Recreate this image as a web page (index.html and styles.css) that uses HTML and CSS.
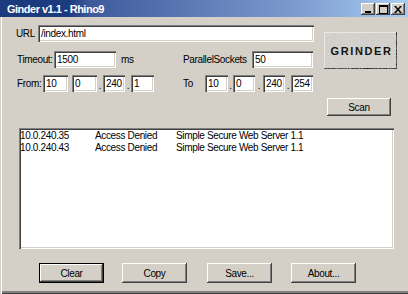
FILE: index.html
```html
<!DOCTYPE html>
<html>
<head>
<meta charset="utf-8">
<link rel="stylesheet" href="styles.css">
</head>
<body>
<div class="window">
  <div class="titlebar">
    <span class="title">Ginder v1.1 - Rhino9</span>
    <div class="tbtns">
      <div class="tbtn"><svg width="8" height="7" viewBox="0 0 8 7"><rect x="1" y="5" width="6" height="2" fill="#000"/></svg></div>
      <div class="tbtn"><svg width="9" height="9" viewBox="0 0 9 9"><rect x="0.5" y="0.5" width="8" height="8" fill="none" stroke="#000"/><rect x="0" y="0" width="9" height="2" fill="#000"/></svg></div>
      <div class="tbtn close"><svg width="8" height="7" viewBox="0 0 8 7"><path d="M0 0h2l2 2.5L6 0h2L5 3.5 8 7H6L4 4.5 2 7H0l3-3.5z" fill="#000"/></svg></div>
    </div>
  </div>
  <div class="top">
    <div class="form">
      <div class="row r1">
        <span class="lbl l-url">URL</span>
        <div class="field f-url">/index.html</div>
      </div>
      <div class="row r2">
        <div class="cell-a">
          <span class="lbl l-timeout">Timeout:</span>
          <div class="field f-timeout">1500</div>
          <span class="lbl l-ms">ms</span>
        </div>
        <div class="cell-b">
          <span class="lbl l-par">ParallelSockets</span>
          <div class="field f-par">50</div>
        </div>
      </div>
      <div class="row r3">
        <div class="cell-a">
          <span class="lbl l-from">From:</span>
          <div class="field ip w25">10</div><span class="dot d4"></span>
          <div class="field ip w25">0</div><span class="dot d6">.</span>
          <div class="field ip w22">240</div><span class="dot d6">.</span>
          <div class="field ip w23">1</div>
        </div>
        <div class="cell-b">
          <span class="lbl l-to">To</span>
          <div class="field ip w23">10</div><span class="dot d5">.</span>
          <div class="field ip w22">0</div><span class="dot d8">.</span>
          <div class="field ip w22">240</div><span class="dot d6">.</span>
          <div class="field ip w22">254</div>
        </div>
      </div>
    </div>
    <div class="side">
      <div class="grinder">
        <svg class="noise" width="73" height="37"><filter id="n"><feTurbulence type="fractalNoise" baseFrequency="0.9" numOctaves="2" seed="3"/><feColorMatrix type="matrix" values="0 0 0 0 0.78  0 0 0 0 0.77  0 0 0 0 0.75  0.9 0 0 0 -0.1"/></filter><rect width="73" height="37" filter="url(#n)"/></svg>
        <span class="gtext">GRINDER</span>
      </div>
      <div class="btn scan">Scan</div>
    </div>
  </div>
  <div class="list">
    <div class="lrow"><span class="c1">10.0.240.35</span><span class="c2">Access Denied</span><span>Simple Secure Web Server 1.1</span></div>
    <div class="lrow"><span class="c1">10.0.240.43</span><span class="c2">Access Denied</span><span>Simple Secure Web Server 1.1</span></div>
  </div>
  <div class="bottom">
    <div class="btn b-clear default">Clear</div>
    <div class="btn b-copy">Copy</div>
    <div class="btn b-save">Save...</div>
    <div class="btn b-about">About...</div>
  </div>
</div>
</body>
</html>
```
FILE: styles.css
```css
html, body {
  margin: 0;
  padding: 0;
  background: #d4d0c8;
}
.window {
  width: 408px;
  height: 294px;
  background: #d4d0c8;
  font-family: "Liberation Sans", Arial, sans-serif;
  font-size: 10px;
  letter-spacing: -0.35px;
  color: #000;
  box-sizing: border-box;
  box-shadow: inset 1px 0 0 #d4d0c8, inset 2px 0 0 #ffffff, inset 0 -1px 0 #404040, inset 0 -3px 0 #808080;
  display: flex;
  flex-direction: column;
  overflow: hidden;
}
.titlebar {
  height: 17px;
  flex: none;
  display: flex;
  align-items: center;
  justify-content: space-between;
  padding: 0 3px 0 7px;
  background: linear-gradient(to right, #1c3a7e 0, #1c3a7e 68px, #3e5a9c 90px, #7d9dd0 300px, #a6caf0 400px);
}
.title {
  color: #fff;
  font-weight: bold;
  font-size: 11px;
  letter-spacing: -0.5px;
}
.tbtns {
  display: flex;
  margin-top: 1px;
}
.tbtn {
  width: 14px;
  height: 12px;
  box-sizing: border-box;
  background: #d4d0c8;
  box-shadow: inset -1px -1px 0 #404040, inset 1px 1px 0 #ffffff, inset -2px -2px 0 #808080;
  display: flex;
  align-items: center;
  justify-content: center;
}
.tbtn + .tbtn { margin-left: 1px; }
.top {
  display: flex;
  flex: none;
}
.form {
  width: 314px;
  flex: none;
}
.row {
  display: flex;
  align-items: center;
  height: 17px;
}
.r1 { margin-top: 8px; padding-left: 16px; }
.r2 { margin-top: 9px; padding-left: 17px; }
.r3 { margin-top: 7px; padding-left: 17px; }
.cell-a {
  width: 166px;
  display: flex;
  align-items: center;
  flex: none;
}
.cell-b {
  display: flex;
  align-items: center;
}
.lbl { white-space: nowrap; }
.l-url { width: 22px; }
.l-timeout { width: 37px; }
.l-ms { margin-left: 5px; }
.l-par { width: 69px; }
.l-from { width: 26px; }
.l-to { width: 22px; }
.field {
  height: 17px;
  box-sizing: border-box;
  background: #fff;
  box-shadow: inset 1px 1px 0 #808080, inset 2px 2px 0 #404040, inset -1px -1px 0 #ffffff, inset -2px -2px 0 #d4d0c8;
  padding: 2px 0 0 3px;
  line-height: 13px;
  white-space: nowrap;
  overflow: hidden;
}
.f-url { width: 276px; }
.f-timeout { width: 62px; }
.f-par { width: 61px; }
.w22 { width: 22px; }
.w23 { width: 23px; }
.w25 { width: 25px; }
.dot {
  align-self: flex-end;
  text-align: center;
  line-height: 12px;
  height: 12px;
}
.d4 { width: 4px; }
.d5 { width: 5px; }
.d6 { width: 6px; }
.d8 { width: 8px; }
.side {
  display: flex;
  flex-direction: column;
  align-items: flex-start;
}
.grinder {
  position: relative;
  margin-top: 15px;
  margin-left: 10px;
  width: 73px;
  height: 37px;
  box-sizing: border-box;
  background: #c9c6c0;
  box-shadow: inset -1px -1px 0 #000, inset 1px 1px 0 #ece9e4;
  display: flex;
  align-items: center;
  justify-content: center;
  overflow: hidden;
}
.noise {
  position: absolute;
  left: 0;
  top: 0;
}
.gtext {
  position: relative;
  font-weight: bold;
  font-size: 11px;
  letter-spacing: 1.6px;
  margin-left: 2px;
  color: #151515;
}
.btn {
  box-sizing: border-box;
  background: #d4d0c8;
  box-shadow: inset -1px -1px 0 #404040, inset 1px 1px 0 #ffffff, inset -2px -2px 0 #808080;
  display: flex;
  align-items: center;
  justify-content: center;
  white-space: nowrap;
}
.scan {
  margin-top: 29px;
  margin-left: 13px;
  width: 64px;
  height: 18px;
}
.list {
  margin: 12px 0 0 19px;
  width: 375px;
  height: 121px;
  flex: none;
  box-sizing: border-box;
  background: #fff;
  box-shadow: inset 1px 1px 0 #808080, inset 2px 2px 0 #404040, inset -1px -1px 0 #ffffff, inset -2px -2px 0 #d4d0c8;
  padding: 2px 0 0 1px;
}
.lrow {
  display: flex;
  line-height: 12px;
  white-space: nowrap;
}
.c1 { width: 75px; }
.c2 { width: 81px; }
.bottom {
  display: flex;
  margin-top: 14px;
  padding-left: 39px;
  flex: none;
}
.bottom .btn {
  width: 65px;
  height: 20px;
}
.default {
  box-shadow: inset 0 0 0 1px #000, inset -2px -2px 0 #404040, inset 2px 2px 0 #ffffff, inset -3px -3px 0 #808080;
}
.b-copy { margin-left: 18px; }
.b-save { margin-left: 20px; }
.b-about { margin-left: 19px; }
```
